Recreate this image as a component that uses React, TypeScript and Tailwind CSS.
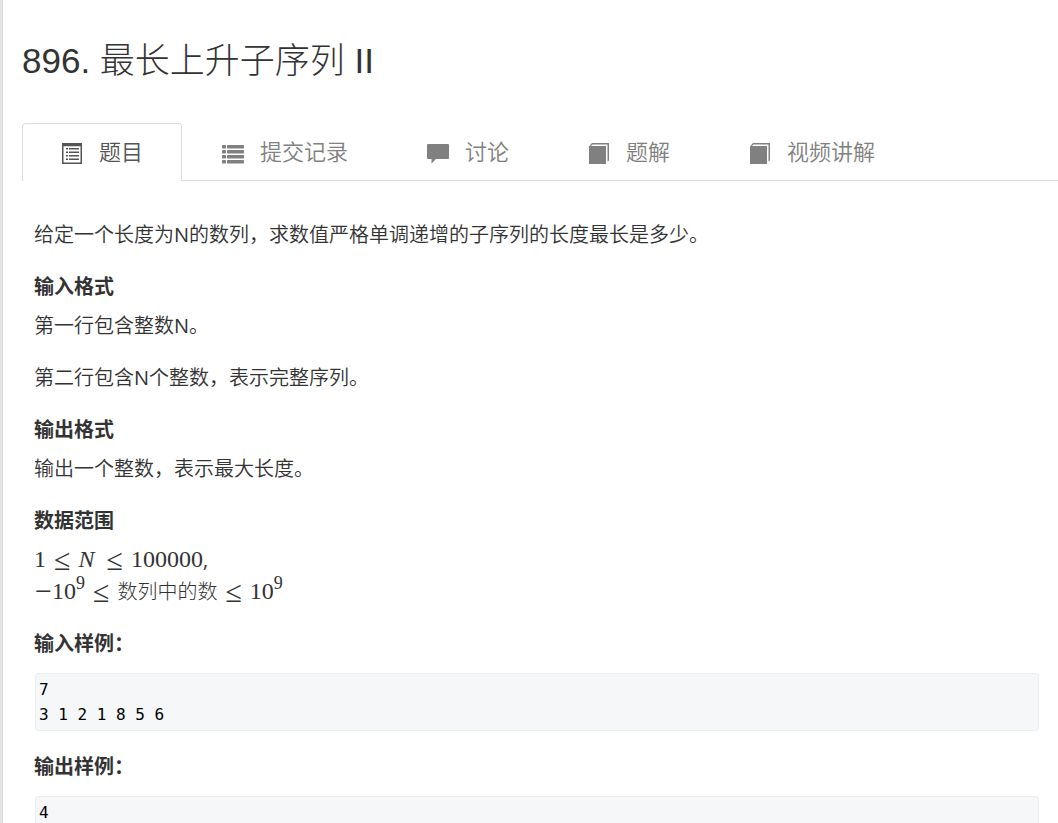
import type { ReactNode } from 'react';

const ListAltIcon = () => (
  <svg width="22" height="22" viewBox="0 0 22 22" fill="currentColor" aria-hidden="true">
    <path fillRule="evenodd" d="M1 0h20v21H1zM2.500 3.200v16.300h17V3.200z" />
    <path d="M5 5h2v1.500H5zM8 5h10v1.500H8zM5 8.500h2V10H5zM8 8.500h10V10H8zM5 12h2v1.500H5zM8 12h10v1.500H8zM5 15.500h2V17H5zM8 15.500h10V17H8z" />
  </svg>
);

const ListIcon = () => (
  <svg width="22" height="22" viewBox="0 0 22 22" fill="currentColor" aria-hidden="true">
    {[2, 7, 12, 17].map(y => (
      <g key={y}>
        <rect x="0" y={y} width="4" height="3.4" rx="0.6" />
        <rect x="5" y={y} width="17" height="3.4" rx="0.6" />
      </g>
    ))}
  </svg>
);

const CommentIcon = () => (
  <svg width="22" height="22" viewBox="0 0 22 22" fill="currentColor" aria-hidden="true">
    <path d="M1 1h20a1 1 0 0 1 1 1v13a1 1 0 0 1-1 1H9L4.500 20.500V16H1a1 1 0 0 1-1-1V2a1 1 0 0 1 1-1z" />
  </svg>
);

const BookIcon = () => (
  <svg width="22" height="22" viewBox="0 0 22 22" fill="currentColor" aria-hidden="true">
    <path d="M1 3.500L4 0h17v17.500L19.500 18.500V1.500H4.500L3 3h15v18H1z" />
  </svg>
);

const tabs = [
  { label: '题目', icon: <ListAltIcon />, active: true },
  { label: '提交记录', icon: <ListIcon />, active: false },
  { label: '讨论', icon: <CommentIcon />, active: false },
  { label: '题解', icon: <BookIcon />, active: false },
  { label: '视频讲解', icon: <BookIcon />, active: false },
];

const Heading = ({ children }: { children: ReactNode }) => (
  <h4 className="mt-6 mb-[11px] font-bold leading-6">{children}</h4>
);

const Sample = ({ children }: { children: string }) => (
  <pre className="mt-1.5 ml-px rounded-[3px] border border-[#eee] bg-[#f6f7f9] p-[3px] font-['DejaVu_Sans_Mono',monospace] text-base leading-[25px] text-black">
    {children}
  </pre>
);

const Latin = ({ children }: { children: string }) => <span className="font-normal">{children}</span>;

const Leq = () => <span className="mx-2 align-[-3px] text-[30px] leading-[0]">≤</span>;

const TenNinth = () => (
  <span>
    10<sup className="top-0 align-[10px] text-[18px] leading-[0]">9</sup>
  </span>
);

export default function App() {
  return (
    <div className="min-h-screen bg-[#e4e4e4] pl-0.5">
      <div className="min-h-screen overflow-hidden border-l border-[#d8d8d8] bg-white pt-[37px] text-[#333]">
        <h1 className="pl-[19px] font-['Liberation_Sans','Noto_Sans_CJK_SC',sans-serif] text-[35px] font-light leading-[48px]">
          896. 最长上升子序列 II
        </h1>

        <nav className="mt-[38px] ml-[19px] border-b border-[#ddd] font-['Open_Sans','Noto_Sans_CJK_SC',sans-serif] text-[22px] font-[350]">
          <div className="-mb-px flex gap-px">
            {tabs.map(tab => (
              <a
                key={tab.label}
                href="#"
                className={
                  tab.active
                    ? 'flex h-[58px] items-center gap-4 rounded-t border border-b-0 border-[#ddd] bg-white px-[38px] text-[#555]'
                    : 'flex h-[58px] items-center gap-4 rounded-t border border-b-0 border-transparent px-[38px] text-[#808080]'
                }
              >
                <span className="pt-0.5">{tab.icon}</span>
                <span className="pb-0.5 whitespace-nowrap">{tab.label}</span>
              </a>
            ))}
          </div>
        </nav>

        <main className="flex flex-col pt-[38px] pr-[19px] pb-6 pl-[31px] font-['Open_Sans','Noto_Sans_CJK_SC',sans-serif] text-xl font-[350] leading-8">
          <p>
            给定一个长度为<Latin>N</Latin>的数列，求数值严格单调递增的子序列的长度最长是多少。
          </p>

          <Heading>输入格式</Heading>
          <p>
            第一行包含整数<Latin>N</Latin>。
          </p>
          <p className="mt-5">
            第二行包含<Latin>N</Latin>个整数，表示完整序列。
          </p>

          <Heading>输出格式</Heading>
          <p>输出一个整数，表示最大长度。</p>

          <Heading>数据范围</Heading>
          <div className="-mt-px pb-px font-['Liberation_Serif','Noto_Sans_CJK_SC',serif] text-2xl leading-8 font-normal">
            <div className="whitespace-nowrap">
              1<Leq />
              <i className="pr-1">N</i>
              <Leq />
              100000
              <span className="font-['Open_Sans',sans-serif] text-xl leading-[0]">,</span>
            </div>
            <div className="whitespace-nowrap">
              <span className="ml-px align-[-2px] text-[30px] leading-[0]">−</span>
              <TenNinth />
              <Leq />
              <span className="text-xl leading-[0] font-light">数列中的数</span>
              <Leq />
              <TenNinth />
            </div>
          </div>

          <Heading>输入样例：</Heading>
          <Sample>{'7\n3 1 2 1 8 5 6'}</Sample>

          <Heading>输出样例：</Heading>
          <Sample>4</Sample>
        </main>
      </div>
    </div>
  );
}
